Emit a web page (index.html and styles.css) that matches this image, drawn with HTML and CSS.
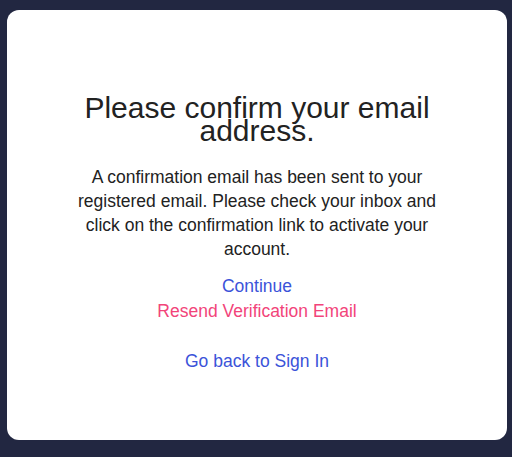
FILE: index.html
```html
<!DOCTYPE html>
<html>
<head>
<meta charset="utf-8">
<link rel="stylesheet" href="styles.css">
</head>
<body>
<div class="page">
  <main class="card">
    <div class="content">
      <h1 class="title">Please confirm your email address.</h1>
      <p class="message">A confirmation email has been sent to your registered email. Please check your inbox and click on the confirmation link to activate your account.</p>
      <div class="actions">
        <a class="link link-primary" href="#">Continue</a>
        <a class="link link-danger" href="#">Resend Verification Email</a>
      </div>
      <a class="link link-primary back" href="#">Go back to Sign In</a>
    </div>
  </main>
</div>
</body>
</html>
```

FILE: styles.css
```css
html, body {
  margin: 0;
  padding: 0;
  background: #222741;
  font-family: "Liberation Sans", Arial, sans-serif;
}
.page {
  padding: 10px 5px 17px 7px;
  height: 457px;
  box-sizing: border-box;
  display: flex;
}
.card {
  flex: 1;
  background: #ffffff;
  border-radius: 12px;
  display: flex;
  justify-content: center;
}
.content {
  width: 380px;
  padding-top: 86px;
  text-align: center;
  display: flex;
  flex-direction: column;
  align-items: center;
}
.title {
  margin: 0;
  font-size: 30px;
  font-weight: 400;
  line-height: 23px;
  color: #222222;
  width: 370px;
}
.message {
  margin: 23px 0 0;
  font-size: 17.5px;
  line-height: 24px;
  color: #222222;
  width: 362px;
}
.actions {
  margin-top: 13px;
  display: flex;
  flex-direction: column;
  align-items: center;
}
.link {
  font-size: 17.5px;
  line-height: 25px;
  text-decoration: none;
}
.link-primary { color: #3b53d9; }
.link-danger { color: #f2447a; }
.back { margin-top: 25px; }
```
